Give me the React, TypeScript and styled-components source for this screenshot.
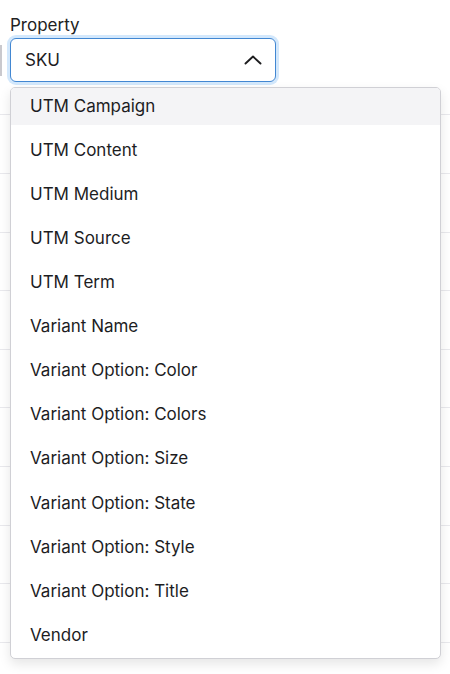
import React, { useEffect, useRef } from 'react';
import styled, { createGlobalStyle } from 'styled-components';

const GlobalStyle = createGlobalStyle`
    html, body {
        margin: 0;
        padding: 0;
        background: #ffffff;
    }
    body {
        font-family: Inter, "Liberation Sans", sans-serif;
        color: #1f1f21;
    }
    * {
        box-sizing: border-box;
    }
`;

const Page = styled.div`
    position: relative;
    width: 450px;
    height: 674px;
    overflow: hidden;
`;

const Field = styled.div`
    padding-top: 15px;
`;

const Label = styled.div`
    font-size: 17px;
    line-height: 20px;
    padding-left: 10px;
    margin-bottom: 3px;
    color: #222;
`;

const FieldRow = styled.div`
    display: flex;
    align-items: center;
    gap: 8px;
`;

const EdgeMark = styled.div`
    width: 2px;
    height: 31px;
    background: #c9c9ce;
`;

const SelectBox = styled.div<{ $open?: boolean }>`
    width: 266px;
    height: 44px;
    display: flex;
    align-items: center;
    justify-content: space-between;
    padding: 0 13px 0 14px;
    border: 1px solid ${(p) => (p.$open ? '#4287d2' : '#c9c9ce')};
    border-radius: 6px;
    box-shadow: ${(p) => (p.$open ? '0 0 0 3px #d3e8fc' : 'none')};
    font-size: 17px;
    color: #1d1d1f;
    background: #fff;
`;

const Table = styled.div`
    display: flex;
    flex-direction: column;
`;

const TableRow = styled.div<{ $head?: boolean }>`
    height: ${(p) => (p.$head ? '33.4px' : '58.6px')};
    border-bottom: 1px solid #e9e9ed;
    flex-shrink: 0;
`;

const Menu = styled.div`
    position: absolute;
    top: 87px;
    left: 10px;
    width: 431px;
    height: 572px;
    border: 1px solid #d0d0d5;
    border-radius: 5px;
    background: #fff;
    box-shadow: 0 5px 12px rgba(0, 0, 0, 0.1);
    overflow: hidden;
`;

const OptionList = styled.ul`
    list-style: none;
    margin: 0;
    padding: 4px 0;
`;

const OptionItem = styled.li<{ $active?: boolean }>`
    height: 44.1px;
    display: flex;
    align-items: center;
    padding: 5.4px 20px 0 19px;
    font-size: 17px;
    color: #1d1d1f;
    background: ${(p) => (p.$active ? '#f4f4f6' : 'transparent')};
`;

const options = [
    'UTM Campaign',
    'UTM Content',
    'UTM Medium',
    'UTM Source',
    'UTM Term',
    'Variant Name',
    'Variant Option: Color',
    'Variant Option: Colors',
    'Variant Option: Size',
    'Variant Option: State',
    'Variant Option: Style',
    'Variant Option: Title',
    'Vendor',
];

const ChevronUp = () => (
    <svg width="18" height="10" viewBox="0 0 18 10" fill="none">
        <path d="M1.5 8.5 L9 1.5 L16.5 8.5" stroke="#1d1d1f" strokeWidth="1.9" strokeLinecap="round" strokeLinejoin="round" />
    </svg>
);

const App: React.FC = () => {
    const menuRef = useRef<HTMLDivElement>(null);

    // list opens scrolled to the end
    useEffect(() => {
        if (menuRef.current) {
            menuRef.current.scrollTop = menuRef.current.scrollHeight;
        }
    }, []);

    return (
        <Page>
            <GlobalStyle />
            <Field>
                <Label>Property</Label>
                <FieldRow>
                    <EdgeMark />
                    <SelectBox $open>
                        <span>SKU</span>
                        <ChevronUp />
                    </SelectBox>
                </FieldRow>
            </Field>
            <Table>
                <TableRow $head />
                {Array.from({ length: 10 }).map((_, i) => (
                    <TableRow key={i} />
                ))}
            </Table>
            <Menu ref={menuRef}>
                <OptionList>
                    {options.map((o) => (
                        <OptionItem key={o} $active={o === 'UTM Campaign'}>
                            {o}
                        </OptionItem>
                    ))}
                </OptionList>
            </Menu>
        </Page>
    );
};

export default App;
